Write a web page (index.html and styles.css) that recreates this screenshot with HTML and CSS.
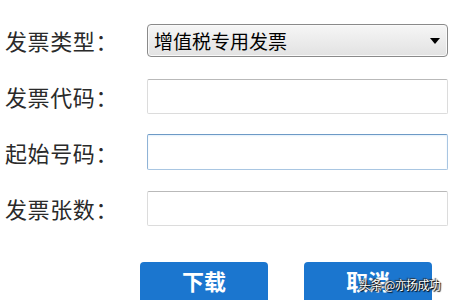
FILE: index.html
```html
<!DOCTYPE html>
<html lang="zh-CN">

<head>
  <meta charset="UTF-8" />
  <title>发票下载</title>
  <link rel="stylesheet" href="styles.css">
</head>

<body>
  <form class="invoice-form">
    <div class="row">
      <label class="label" for="invType">发票类型：</label>
      <div class="select-wrap">
        <select id="invType" class="field select">
          <option>增值税专用发票</option>
          <option>增值税普通发票</option>
        </select>
        <svg class="arrow" width="10" height="6" viewBox="0 0 10 6">
          <path d="M0 0 H10 L5 6 Z" fill="#000" />
        </svg>
      </div>
    </div>

    <div class="row">
      <label class="label" for="invCode">发票代码：</label>
      <input type="text" id="invCode" class="field input" />
    </div>

    <div class="row">
      <label class="label" for="startNo">起始号码：</label>
      <input type="text" id="startNo" class="field input focused" />
    </div>

    <div class="row">
      <label class="label" for="invCount">发票张数：</label>
      <input type="text" id="invCount" class="field input" />
    </div>

    <div class="actions">
      <button type="button" class="btn">下载</button>
      <div class="btn-wrap">
        <button type="button" class="btn">取消</button>
        <span class="watermark">头条 @亦扬成功</span>
      </div>
    </div>
  </form>
</body>

</html>
```

FILE: styles.css
```css
* {
  box-sizing: border-box;
}

body {
  margin: 0;
  background: #fff;
  color: #2a2a2a;
  font-family: "Noto Sans CJK SC", "Liberation Sans", sans-serif;
  overflow: hidden;
}

.invoice-form {
  padding: 12px 0 0 5px;
}

.row {
  display: flex;
  align-items: center;
  height: 56px;
}

.label {
  width: 142px;
  font-size: 22px;
  letter-spacing: 0.6px;
  line-height: 1;
}

.field {
  width: 301px;
  font-family: inherit;
}

.input {
  height: 35px;
  border: 1px solid #dcdcdc;
  border-top-color: #b9b9b9;
  border-radius: 2px;
  background: #fff;
  outline: none;
}

.input.focused {
  height: 36px;
  border-color: #a9c6e2;
  border-top-color: #6d9ac6;
  border-left-color: #8fb3d6;
  box-shadow: inset 0 1px 2px #e3f0fb;
}

/* select with custom arrow */
.select-wrap {
  position: relative;
}

.select {
  display: block;
  height: 33px;
  appearance: none;
  -webkit-appearance: none;
  border: 1px solid #8a8a8a;
  border-radius: 4px;
  background: linear-gradient(#f6f6f6, #e2e2e2);
  box-shadow: inset 0 0 0 1px #fafafa;
  font-size: 19px;
  color: #000;
  padding: 0 24px 0 6px;
  line-height: 31px;
}

.arrow {
  position: absolute;
  right: 8px;
  top: 14px;
  pointer-events: none;
}

.actions {
  display: flex;
  gap: 36px;
  margin: 26px 0 0 135px;
}

.btn {
  width: 128px;
  height: 48px;
  border: none;
  border-radius: 4px;
  background: #1b76cf;
  color: #fff;
  font-family: inherit;
  font-size: 22px;
  font-weight: bold;
  padding: 0 0 12px;
  cursor: pointer;
}

.btn-wrap {
  position: relative;
}

.watermark {
  position: absolute;
  left: 55px;
  top: 16px;
  font-size: 12px;
  line-height: 14px;
  color: #fff;
  white-space: nowrap;
  letter-spacing: -0.6px;
  text-shadow: 0 0 1px #000, 1px 1px 1px #000, -1px -1px 1px #333;
}
```
